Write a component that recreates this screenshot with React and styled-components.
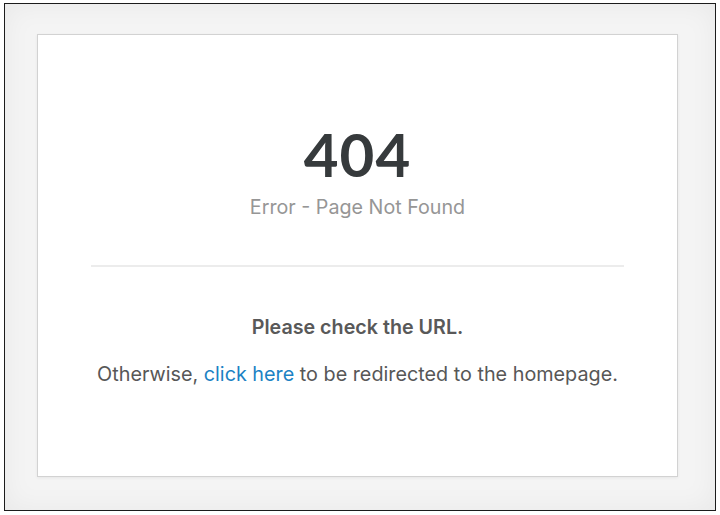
import React from 'react';
import styled, { createGlobalStyle } from 'styled-components';

const GlobalStyle = createGlobalStyle`
    html, body {
        margin: 0;
        padding: 0;
        background: #ffffff;
        font-family: "Inter", "Liberation Sans", sans-serif;
    }
`;

const Frame = styled.div`
    box-sizing: border-box;
    width: 712px;
    height: 508px;
    margin: 3px 0 0 4px;
    border: 1px solid #1c1c1c;
    background: #f4f4f4;
    box-shadow: inset 0 0 28px rgba(0, 0, 0, 0.05);
    padding: 30px 37px 33px 32px;
    display: flex;
`;

const Card = styled.main`
    box-sizing: border-box;
    flex: 1;
    background: #ffffff;
    border: 1px solid #d2d2d2;
    box-shadow: 0 1px 3px rgba(0, 0, 0, 0.06);
    display: flex;
    flex-direction: column;
    align-items: center;
    text-align: center;
    padding-top: 89px;
`;

const Code = styled.h1`
    margin: 0;
    font-family: "Lato", sans-serif;
    font-size: 60px;
    line-height: 60px;
    font-weight: 700;
    color: #363a3c;
    letter-spacing: 1px;
`;

const Subtitle = styled.p`
    margin: 11px 0 0;
    font-size: 19.7px;
    line-height: 24px;
    color: #969696;
`;

const Divider = styled.hr`
    align-self: stretch;
    margin: 46px 53px 0 53px;
    border: 0;
    border-top: 2px solid #ececec;
`;

const Lead = styled.p`
    margin: 48px 0 0;
    font-size: 19.7px;
    line-height: 24px;
    font-weight: 600;
    color: #595959;
`;

const Body = styled.p`
    margin: 23px 0 0;
    font-size: 19.8px;
    line-height: 24px;
    color: #575757;
`;

const Link = styled.a`
    color: #1c82c4;
    text-decoration: none;
`;

export default function App() {
    return (
        <>
            <GlobalStyle />
            <Frame>
                <Card>
                    <Code>404</Code>
                    <Subtitle>Error - Page Not Found</Subtitle>
                    <Divider />
                    <Lead>Please check the URL.</Lead>
                    <Body>
                        Otherwise, <Link href="#">click here</Link> to be redirected to the homepage.
                    </Body>
                </Card>
            </Frame>
        </>
    );
}
